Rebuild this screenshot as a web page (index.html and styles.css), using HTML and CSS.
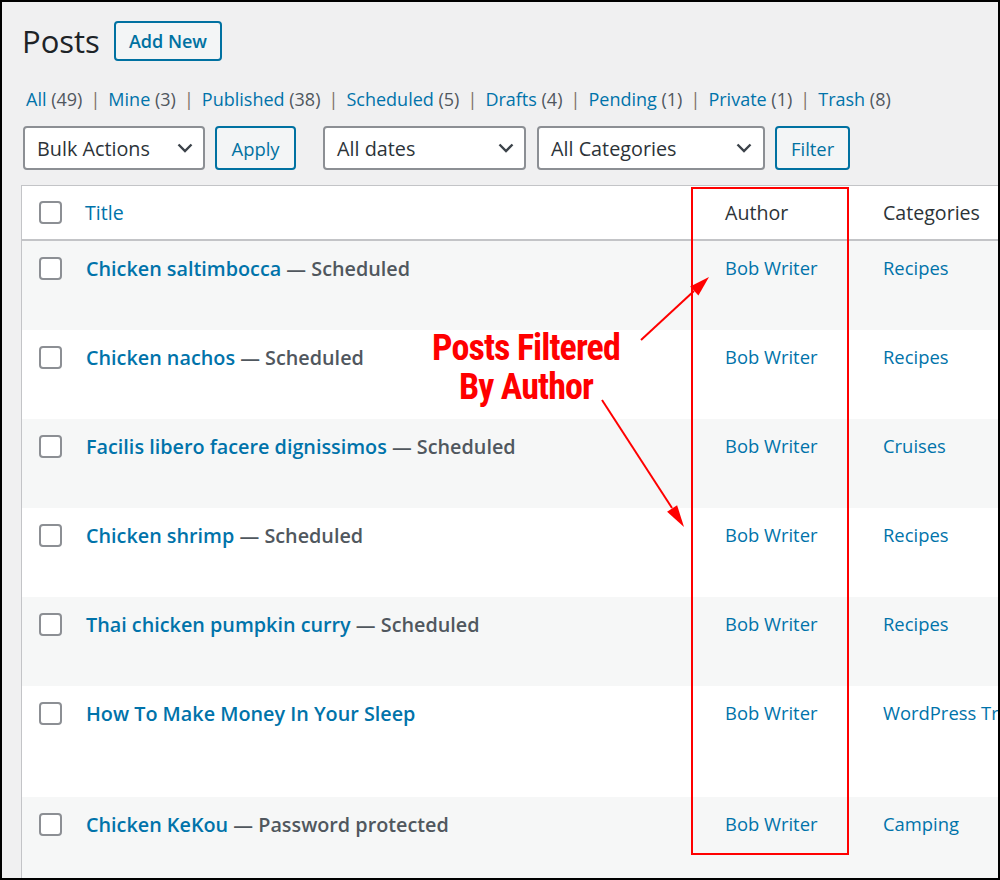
FILE: index.html
```html
<!DOCTYPE html>
<html lang="en">
<head>
<meta charset="utf-8">
<title>Posts</title>
<link rel="stylesheet" href="styles.css">
</head>
<body>
<div class="frame">
  <div class="wrap">
    <div class="head">
      <h1>Posts</h1>
      <a class="add-new" href="#">Add New</a>
    </div>
    <ul class="subsubsub">
      <li><a href="#">All <span class="count">(49)</span></a><span class="sep">|</span></li>
      <li><a href="#">Mine <span class="count">(3)</span></a><span class="sep">|</span></li>
      <li><a href="#">Published <span class="count">(38)</span></a><span class="sep">|</span></li>
      <li><a href="#">Scheduled <span class="count">(5)</span></a><span class="sep">|</span></li>
      <li><a href="#">Drafts <span class="count">(4)</span></a><span class="sep">|</span></li>
      <li><a href="#">Pending <span class="count">(1)</span></a><span class="sep">|</span></li>
      <li><a href="#">Private <span class="count">(1)</span></a><span class="sep">|</span></li>
      <li><a href="#">Trash <span class="count">(8)</span></a></li>
    </ul>
    <div class="tablenav">
      <div class="select sel-bulk"><span>Bulk Actions</span><svg class="chev" width="16" height="10" viewBox="0 0 16 10"><path d="M1.5 1.5 L8 8 L14.5 1.5"/></svg></div>
      <button class="button btn-apply">Apply</button>
      <div class="select sel-dates"><span>All dates</span><svg class="chev" width="16" height="10" viewBox="0 0 16 10"><path d="M1.5 1.5 L8 8 L14.5 1.5"/></svg></div>
      <div class="select sel-cats"><span>All Categories</span><svg class="chev" width="16" height="10" viewBox="0 0 16 10"><path d="M1.5 1.5 L8 8 L14.5 1.5"/></svg></div>
      <button class="button btn-filter">Filter</button>
    </div>
    <table class="widefat">
      <colgroup>
        <col class="col-cb">
        <col class="col-title">
        <col class="col-author">
        <col class="col-cats">
      </colgroup>
      <thead>
        <tr>
          <th class="th-cb"><span class="cb"></span></th>
          <th class="th-title"><a href="#">Title</a></th>
          <th class="th-text">Author</th>
          <th class="th-text">Categories</th>
        </tr>
      </thead>
      <tbody>
        <tr class="alt">
          <td class="td-cb"><span class="cb"></span></td>
          <td class="td-title"><strong><a class="row-title" href="#">Chicken saltimbocca</a> — <span class="post-state">Scheduled</span></strong></td>
          <td class="td-text"><a href="#">Bob Writer</a></td>
          <td class="td-text"><a href="#">Recipes</a></td>
        </tr>
        <tr>
          <td class="td-cb"><span class="cb"></span></td>
          <td class="td-title"><strong><a class="row-title" href="#">Chicken nachos</a> — <span class="post-state">Scheduled</span></strong></td>
          <td class="td-text"><a href="#">Bob Writer</a></td>
          <td class="td-text"><a href="#">Recipes</a></td>
        </tr>
        <tr class="alt">
          <td class="td-cb"><span class="cb"></span></td>
          <td class="td-title"><strong><a class="row-title" href="#">Facilis libero facere dignissimos</a> — <span class="post-state">Scheduled</span></strong></td>
          <td class="td-text"><a href="#">Bob Writer</a></td>
          <td class="td-text"><a href="#">Cruises</a></td>
        </tr>
        <tr>
          <td class="td-cb"><span class="cb"></span></td>
          <td class="td-title"><strong><a class="row-title" href="#">Chicken shrimp</a> — <span class="post-state">Scheduled</span></strong></td>
          <td class="td-text"><a href="#">Bob Writer</a></td>
          <td class="td-text"><a href="#">Recipes</a></td>
        </tr>
        <tr class="alt">
          <td class="td-cb"><span class="cb"></span></td>
          <td class="td-title"><strong><a class="row-title" href="#">Thai chicken pumpkin curry</a> — <span class="post-state">Scheduled</span></strong></td>
          <td class="td-text"><a href="#">Bob Writer</a></td>
          <td class="td-text"><a href="#">Recipes</a></td>
        </tr>
        <tr class="tall">
          <td class="td-cb"><span class="cb"></span></td>
          <td class="td-title"><strong><a class="row-title" href="#">How To Make Money In Your Sleep</a></strong></td>
          <td class="td-text"><a href="#">Bob Writer</a></td>
          <td class="td-text nowrap"><a href="#">WordPress Training</a></td>
        </tr>
        <tr class="alt">
          <td class="td-cb"><span class="cb"></span></td>
          <td class="td-title"><strong><a class="row-title" href="#">Chicken KeKou</a> — <span class="post-state">Password protected</span></strong></td>
          <td class="td-text"><a href="#">Bob Writer</a></td>
          <td class="td-text"><a href="#">Camping</a></td>
        </tr>
      </tbody>
    </table>
  </div>

  <svg class="marks" width="1000" height="880" viewBox="0 0 1000 880">
    <rect x="692" y="188" width="156" height="666" fill="none" stroke="#ff0000" stroke-width="2"/>
    <line x1="641" y1="340" x2="694" y2="291" stroke="#ff0000" stroke-width="2"/>
    <polygon points="709,277 698.4,295.4 690.2,286.6" fill="#ff0000"/>
    <line x1="602" y1="400" x2="672" y2="508" stroke="#ff0000" stroke-width="2"/>
    <polygon points="684,527 677.1,505.2 667.1,511.7" fill="#ff0000"/>
  </svg>
  <div class="annot">Posts Filtered<br>By Author</div>
</div>
</body>
</html>
```

FILE: styles.css
```css
* {
  box-sizing: border-box;
}

body {
  margin: 0;
  font-family: "Open Sans", "Noto Sans", sans-serif;
  background: #ffffff;
}

a {
  text-decoration: none;
  color: #0073aa;
}

.frame {
  width: 1000px;
  height: 880px;
  border: 2px solid #000000;
  background: #f0f0f1;
  position: relative;
  overflow: hidden;
}

.wrap {
  padding: 19px 0 0 19px;
}

/* heading */
.head {
  display: flex;
  align-items: center;
  height: 40px;
}

.head h1 {
  margin: 0 0 0 1px;
  font-size: 31px;
  font-weight: 400;
  line-height: 40px;
  color: #1d2327;
}

.add-new {
  margin-left: 14px;
  height: 40px;
  padding: 0 13px;
  border: 2px solid #0071a1;
  border-radius: 4px;
  background: #f3f5f6;
  color: #0071a1;
  font-size: 18px;
  font-weight: 600;
  line-height: 36px;
}

/* status links */
.subsubsub {
  list-style: none;
  margin: 25px 0 0;
  padding: 0 0 0 5px;
  display: flex;
  font-size: 18px;
  line-height: 27px;
  color: #50575e;
}

.subsubsub .count {
  color: #50575e;
}

.subsubsub .sep {
  display: inline-block;
  width: 26px;
  text-align: center;
  color: #7d7068;
}

/* filters */
.tablenav {
  margin-top: 13px;
  display: flex;
  height: 44px;
  padding-left: 2px;
}

.select {
  height: 44px;
  border: 2px solid #8c8f94;
  border-radius: 4px;
  background: #ffffff;
  color: #2c3338;
  font-size: 19.8px;
  padding: 0 10px 0 12px;
  display: flex;
  align-items: center;
  justify-content: space-between;
}

.chev path {
  fill: none;
  stroke: #3c434a;
  stroke-width: 2.4;
}

.sel-bulk {
  width: 182px;
}

.sel-dates {
  width: 203px;
  margin-left: 27px;
}

.sel-cats {
  width: 228px;
  margin-left: 11px;
  padding-right: 11px;
}

.button {
  height: 44px;
  margin-left: 10px;
  padding: 0 14px;
  border: 2px solid #0071a1;
  border-radius: 4px;
  background: #f3f5f6;
  color: #0071a1;
  font-family: "Open Sans", "Noto Sans", sans-serif;
  font-size: 18.4px;
}

.btn-apply {
  width: 81px;
}

.btn-filter {
  width: 75px;
}

/* table */
.widefat {
  margin-top: 15px;
  width: 1160px;
  table-layout: fixed;
  border-collapse: separate;
  border-spacing: 0;
  background: #ffffff;
  border-top: 1px solid #c3c4c7;
  border-left: 1px solid #c3c4c7;
}

.col-cb {
  width: 54px;
}

.col-title {
  width: 638px;
}

.col-author {
  width: 158px;
}

.col-cats {
  width: 310px;
}

.widefat th,
.widefat td {
  padding: 0;
  text-align: left;
  vertical-align: top;
  font-weight: 400;
}

.widefat thead th {
  border-bottom: 2px solid #c3c4c7;
  font-size: 19.6px;
  line-height: 27px;
  padding-top: 13px;
  padding-bottom: 13px;
  color: #2c3338;
}

.widefat thead .th-cb {
  padding: 15px 0 0 17px;
}

.widefat thead .th-title {
  padding-left: 9px;
}

.widefat thead .th-text {
  padding-left: 11px;
}

.widefat tbody tr {
  height: 89px;
}

.widefat tbody tr.tall {
  height: 111px;
}

.widefat tbody tr.alt td {
  background: #f6f7f7;
}

.widefat .td-cb {
  padding: 16px 0 0 17px;
}

.widefat .td-title {
  padding: 14px 10px 0 10px;
  font-size: 19.8px;
  line-height: 27px;
  color: #50575e;
}

.widefat .td-title strong {
  font-weight: 600;
}

.row-title {
  color: #0073aa;
}

.post-state {
  color: #50575e;
}

.widefat .td-text {
  padding: 13px 10px 0 11px;
  font-size: 18.4px;
  line-height: 27px;
  color: #2c3338;
}

.widefat .nowrap {
  white-space: nowrap;
}

.cb {
  display: block;
  width: 23px;
  height: 23px;
  border: 2px solid #8c8f94;
  border-radius: 4px;
  background: #ffffff;
}

/* annotation overlay */
.marks {
  position: absolute;
  left: -2px;
  top: -2px;
  pointer-events: none;
}

.annot {
  position: absolute;
  left: 374px;
  top: 327px;
  width: 300px;
  text-align: center;
  font-family: "Liberation Sans Narrow", "Roboto Condensed", "DejaVu Sans Condensed", sans-serif;
  font-weight: 700;
  font-size: 36px;
  line-height: 39px;
  letter-spacing: -0.9px;
  color: #ff0000;
}
```
